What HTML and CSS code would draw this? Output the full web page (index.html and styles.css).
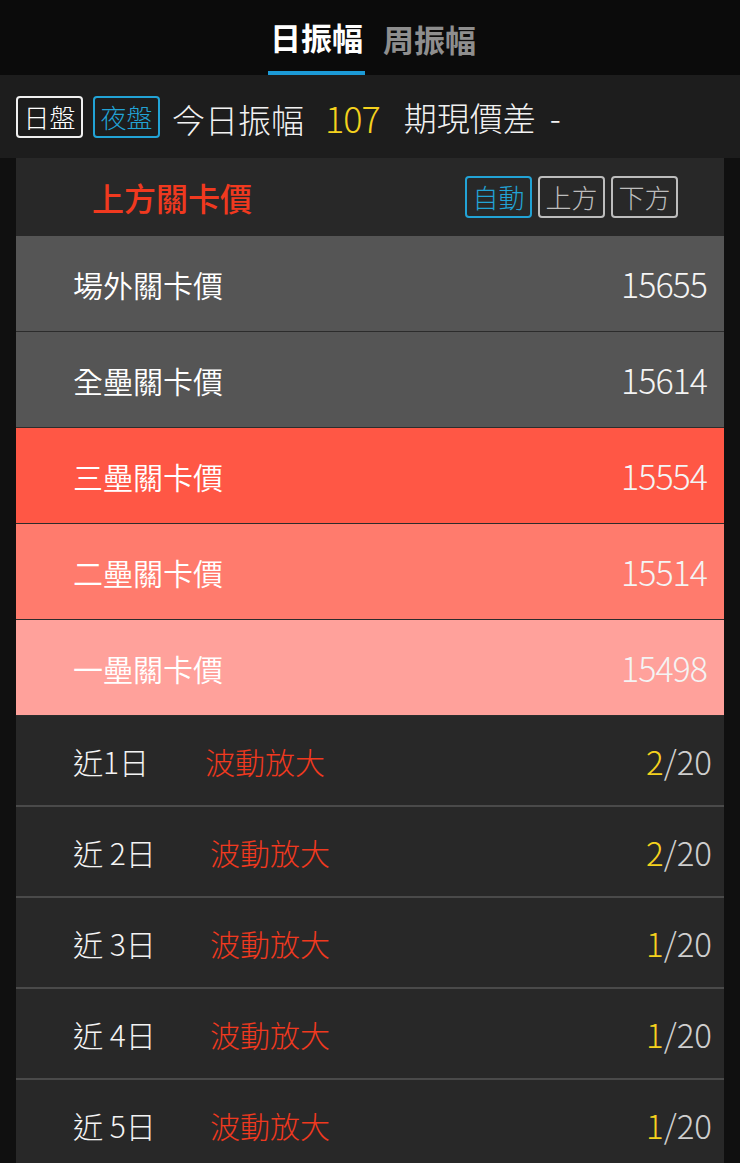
FILE: index.html
```html
<!DOCTYPE html>
<html lang="zh-Hant">
<head>
    <meta charset="UTF-8">
    <meta name="viewport" content="width=device-width, initial-scale=1.0">
    <title>日振幅</title>
    <link rel="stylesheet" href="styles.css">
</head>
<body>
    <nav class="tabs">
        <span class="tab active">日振幅</span>
        <span class="tab">周振幅</span>
    </nav>

    <section class="summary">
        <span class="chip">日盤</span>
        <span class="chip chip-blue">夜盤</span>
        <span class="summary-text">今日振幅<span class="yellow amp">107</span></span>
        <span class="summary-text">期現價差<span class="dash">-</span></span>
    </section>

    <main class="panel">
        <header class="panel-head">
            <h3>上方關卡價</h3>
            <div class="modes">
                <span class="chip chip-blue">自動</span>
                <span class="chip chip-gray">上方</span>
                <span class="chip chip-gray">下方</span>
            </div>
        </header>

        <div class="level level-gray">
            <span>場外關卡價</span><span class="num">15655</span>
        </div>
        <div class="level level-gray">
            <span>全壘關卡價</span><span class="num">15614</span>
        </div>
        <div class="level level-red3">
            <span>三壘關卡價</span><span class="num">15554</span>
        </div>
        <div class="level level-red2">
            <span>二壘關卡價</span><span class="num">15514</span>
        </div>
        <div class="level level-red1">
            <span>一壘關卡價</span><span class="num">15498</span>
        </div>

        <div class="day">
            <span class="day-name">近1日</span>
            <span class="day-state first">波動放大</span>
            <span class="day-count"><span class="yellow">2</span>/20</span>
        </div>
        <div class="day">
            <span class="day-name">近 2日</span>
            <span class="day-state">波動放大</span>
            <span class="day-count"><span class="yellow">2</span>/20</span>
        </div>
        <div class="day">
            <span class="day-name">近 3日</span>
            <span class="day-state">波動放大</span>
            <span class="day-count"><span class="yellow">1</span>/20</span>
        </div>
        <div class="day">
            <span class="day-name">近 4日</span>
            <span class="day-state">波動放大</span>
            <span class="day-count"><span class="yellow">1</span>/20</span>
        </div>
        <div class="day">
            <span class="day-name">近 5日</span>
            <span class="day-state">波動放大</span>
            <span class="day-count"><span class="yellow">1</span>/20</span>
        </div>
    </main>
</body>
</html>
```

FILE: styles.css
```css
/* Base */
* {
    margin: 0;
    padding: 0;
    box-sizing: border-box;
}

body {
    background: #101010;
    color: #f2f2f2;
    font-family: 'Noto Sans CJK TC', 'Noto Sans', sans-serif;
    width: 740px;
    height: 1163px;
    overflow: hidden;
}

.yellow {
    color: #f5d21e;
}

/* Tabs */
.tabs {
    height: 75px;
    background: #0b0b0b;
    display: flex;
    justify-content: center;
    gap: 16px;
    padding-left: 6px;
}

.tab {
    font-size: 31px;
    font-weight: 700;
    color: #8e8e8e;
    line-height: 78px;
    padding: 0 2px;
}

.tab.active {
    color: #fff;
    border-bottom: 4px solid #1c9ad6;
    line-height: 74px;
}

/* Summary bar */
.summary {
    height: 83px;
    background: #1d1d1d;
    display: flex;
    align-items: center;
    padding: 0 16px;
    gap: 10px;
}

.chip {
    display: inline-block;
    width: 67px;
    height: 42px;
    border: 2px solid #f0f0f0;
    border-radius: 4px;
    font-size: 26px;
    font-weight: 300;
    line-height: 37px;
    text-align: center;
    color: #fff;
}

.chip-blue {
    border-color: #22a3d6;
    color: #22a3d6;
}

.chip-gray {
    border-color: #bdbdbd;
    color: #bdbdbd;
}

.summary-text {
    font-size: 33px;
    font-weight: 300;
    margin-left: 2px;
    margin-right: 12px;
    white-space: nowrap;
}

.summary-text .amp {
    font-size: 36px;
    margin-left: 21px;
    letter-spacing: -1px;
}

.summary-text .dash {
    margin-left: 14px;
}

/* Panel */
.panel {
    margin: 0 16px;
    background: #282828;
}

.panel-head {
    height: 78px;
    display: flex;
    align-items: center;
    justify-content: space-between;
    padding: 0 46px 0 76px;
}

.panel-head h3 {
    font-size: 32px;
    font-weight: 500;
    color: #f0391f;
}

.modes {
    display: flex;
    gap: 6px;
}

.level {
    height: 96px;
    display: flex;
    align-items: center;
    justify-content: space-between;
    padding: 0 17px 0 57px;
    font-size: 30px;
    font-weight: 350;
    color: #fff;
    border-bottom: 1px solid #2c2c2c;
}

.level .num {
    font-size: 34px;
    font-weight: 300;
    letter-spacing: -1px;
    color: #f4f4f4;
}

.level-gray { background: #555555; }
.level-red3 { background: #ff5745; }
.level-red2 { background: #ff7b6d; }
.level-red1 { background: #ffa19b; }

.day {
    height: 91px;
    display: flex;
    align-items: center;
    padding: 0 12px 0 57px;
    font-size: 30px;
    border-bottom: 2px solid #4a4a4a;
}

.day-name {
    width: 137px;
    color: #f4f4f4;
    font-weight: 300;
    white-space: pre;
}

.day-state {
    flex: 1;
    color: #f0391f;
    font-weight: 300;
}

.day-state.first {
    margin-left: -5px;
}

.day-count {
    font-size: 33px;
    font-weight: 300;
    color: #cfcfcf;
}
```
